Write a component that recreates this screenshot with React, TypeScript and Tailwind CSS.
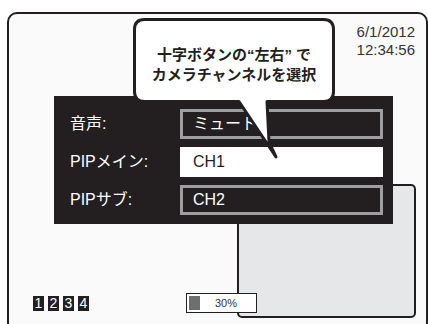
const font = "font-['Liberation_Sans','Noto_Sans_CJK_JP',sans-serif]"

const rows = [
  { label: '音声:', value: 'ミュート', selected: false },
  { label: 'PIPメイン:', value: 'CH1', selected: true },
  { label: 'PIPサブ:', value: 'CH2', selected: false },
]

const Bubble = () => (
  <div className="absolute left-[124px] top-[4px] z-20 w-[202px] h-[142px]">
    <svg width="202" height="142" viewBox="0 0 202 142" className="absolute inset-0">
      <path
        d="M11.5 1.5 H190.5 Q200.5 1.5 200.5 11.5 V73.5 Q200.5 83.5 190.5 83.5 H134 L136 124 L143 139 L106 83.5 H11.5 Q1.5 83.5 1.5 73.5 V11.5 Q1.5 1.5 11.5 1.5 Z"
        fill="#ffffff"
        stroke="#231f20"
        strokeWidth="3"
        strokeLinejoin="round"
      />
    </svg>
    <div className="relative flex flex-col items-center pt-[27px] text-[15px] leading-[20px] font-bold text-[#231f20]">
      <span>十字ボタンの“左右” で</span>
      <span>カメラチャンネルを選択</span>
    </div>
  </div>
)

export default function App() {
  return (
    <div className={`w-[428px] h-[324px] overflow-hidden bg-white pl-[7px] pt-[12px] ${font}`}>
      <div className="relative w-[421px] h-[320px] rounded-[10px] border-2 border-[#231f20] bg-[#fafafa] flex flex-col">
        {/* PIP sub window */}
        <div className="absolute left-[228px] top-[170px] w-[179px] h-[134px] rounded-[5px] border-2 border-[#231f20] bg-[#e6e7e8]" />

        <Bubble />

        <div className="flex justify-end pt-[9px] pr-[11px]">
          <div className="text-[15px] leading-[18px] text-[#333]">
            <div>6/1/2012</div>
            <div>12:34:56</div>
          </div>
        </div>

        <div className="relative z-10 ml-[45px] mt-[37px] w-[339px] h-[128px] bg-[#231f20] pt-[13px] pl-[16px] pr-[10px] flex flex-col gap-[8px]">
          {rows.map((row) => (
            <div key={row.label} className="flex items-center h-[30px]">
              <span className="w-[110px] text-[16px] text-white">{row.label}</span>
              <div
                className={
                  row.selected
                    ? 'flex-1 h-[30px] flex items-center pl-[13px] bg-white text-[16px] text-[#231f20]'
                    : 'flex-1 h-[30px] flex items-center pl-[10px] border-[3px] border-[#9d9fa2] text-[16px] text-white'
                }
              >
                {row.value}
              </div>
            </div>
          ))}
        </div>

        <div className="mt-[69px] pl-[24px] flex items-center">
          <div className="flex gap-[4px]">
            {['1', '2', '3', '4'].map((n) => (
              <span
                key={n}
                className="w-[11px] h-[15px] bg-[#231f20] text-white text-[14px] leading-[15px] flex items-center justify-center"
              >
                {n}
              </span>
            ))}
          </div>
          <div className="relative z-10 ml-[97px] w-[71px] h-[20px] border border-[#231f20] bg-white flex items-center pl-[2px]">
            <div className="w-[11px] h-[14px] bg-[#6d6e71]" />
            <span className="ml-[15px] text-[11px] text-[#333]">30%</span>
          </div>
        </div>
      </div>
    </div>
  )
}
